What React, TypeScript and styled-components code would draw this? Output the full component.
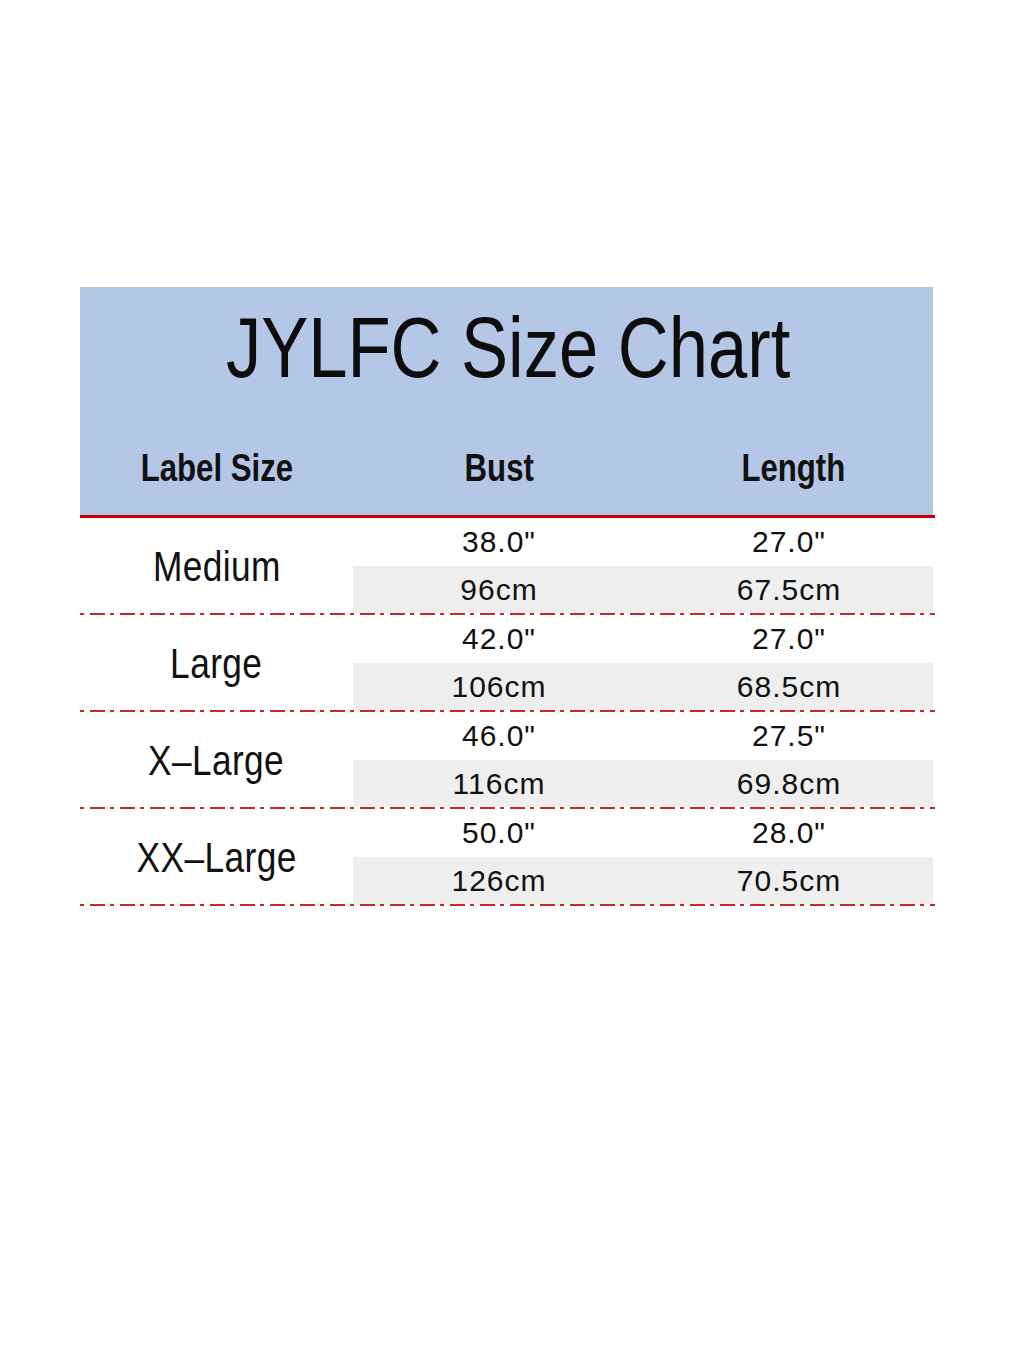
import React from "react";
import styled, { createGlobalStyle } from "styled-components";

const GlobalStyle = createGlobalStyle`
  html, body { margin: 0; padding: 0; background: #ffffff; }
  body { font-family: "Liberation Sans", Arial, sans-serif; color: #111111; }
`;

const SANS = `"Liberation Sans", Arial, sans-serif`;

/* Arial Narrow look: Liberation Sans condensed horizontally to 82% */
const Narrow = styled.span`
  display: inline-block;
  transform: scaleX(0.82);
  transform-origin: center;
  white-space: nowrap;
`;

const Page = styled.div`
  width: 1024px;
  min-height: 1365px;
  padding: 287px 0 0 80px;
  box-sizing: border-box;
`;

const Table = styled.div`
  width: 855px;
  display: flex;
  flex-direction: column;
`;

const Header = styled.div`
  width: 853px;
  background: #b4c7e7;
  display: flex;
  flex-direction: column;
`;

const RedRule = styled.div`
  height: 3px;
  background: #c00000;
`;

const Title = styled.h1`
  margin: 0;
  height: 120px;
  line-height: 120px;
  font-family: ${SANS};
  font-weight: 400;
  font-size: 86px;
  text-align: center;
  color: #0d0d0d;
  padding-left: 4px;
`;

const HeadRow = styled.div`
  display: grid;
  grid-template-columns: 273px 292px 1fr;
  padding: 41px 0 27px;
`;

const HeadCell = styled.div<{ $shift?: number }>`
  font-family: ${SANS};
  font-weight: 700;
  font-size: 38px;
  line-height: 40px;
  text-align: center;
  color: #111111;
  transform: translateX(${(p) => p.$shift ?? 0}px);
`;

const Group = styled.div`
  display: grid;
  grid-template-columns: 273px 292px 288px;
  grid-template-rows: 48px 47px;
`;

const SizeName = styled.div`
  grid-row: 1 / span 2;
  display: flex;
  align-items: center;
  justify-content: center;
  font-family: ${SANS};
  font-size: 43px;
  letter-spacing: 0.5px;
  color: #111111;
  padding-top: 2px;
`;

const Value = styled.div<{ $shaded?: boolean }>`
  display: flex;
  align-items: center;
  justify-content: center;
  font-family: ${SANS};
  font-size: 30px;
  letter-spacing: 1px;
  color: #111111;
  background: ${(p) => (p.$shaded ? "#eeeeee" : "transparent")};
`;

const DashRule = styled.div`
  height: 2px;
  width: 855px;
  background: repeating-linear-gradient(
    to right,
    #c8282c 0px,
    #c8282c 4px,
    transparent 4px,
    transparent 10px,
    #c8282c 10px,
    #c8282c 25px,
    transparent 25px,
    transparent 30px
  );
`;

type Row = { name: string; bustIn: string; lenIn: string; bustCm: string; lenCm: string };

const rows: Row[] = [
  { name: "Medium", bustIn: '38.0"', lenIn: '27.0"', bustCm: "96cm", lenCm: "67.5cm" },
  { name: "Large", bustIn: '42.0"', lenIn: '27.0"', bustCm: "106cm", lenCm: "68.5cm" },
  { name: "X\u2013Large", bustIn: '46.0"', lenIn: '27.5"', bustCm: "116cm", lenCm: "69.8cm" },
  { name: "XX\u2013Large", bustIn: '50.0"', lenIn: '28.0"', bustCm: "126cm", lenCm: "70.5cm" },
];

export default function App() {
  return (
    <Page>
      <GlobalStyle />
      <Table>
        <Header>
          <Title>
            <Narrow>JYLFC Size Chart</Narrow>
          </Title>
          <HeadRow>
            <HeadCell>
              <Narrow>Label Size</Narrow>
            </HeadCell>
            <HeadCell>
              <Narrow>Bust</Narrow>
            </HeadCell>
            <HeadCell $shift={4}>
              <Narrow>Length</Narrow>
            </HeadCell>
          </HeadRow>
        </Header>
        <RedRule />
        {rows.map((r) => (
          <React.Fragment key={r.name}>
            <Group>
              <SizeName>
                <Narrow>{r.name}</Narrow>
              </SizeName>
              <Value>{r.bustIn}</Value>
              <Value>{r.lenIn}</Value>
              <Value $shaded>{r.bustCm}</Value>
              <Value $shaded>{r.lenCm}</Value>
            </Group>
            <DashRule />
          </React.Fragment>
        ))}
      </Table>
    </Page>
  );
}
